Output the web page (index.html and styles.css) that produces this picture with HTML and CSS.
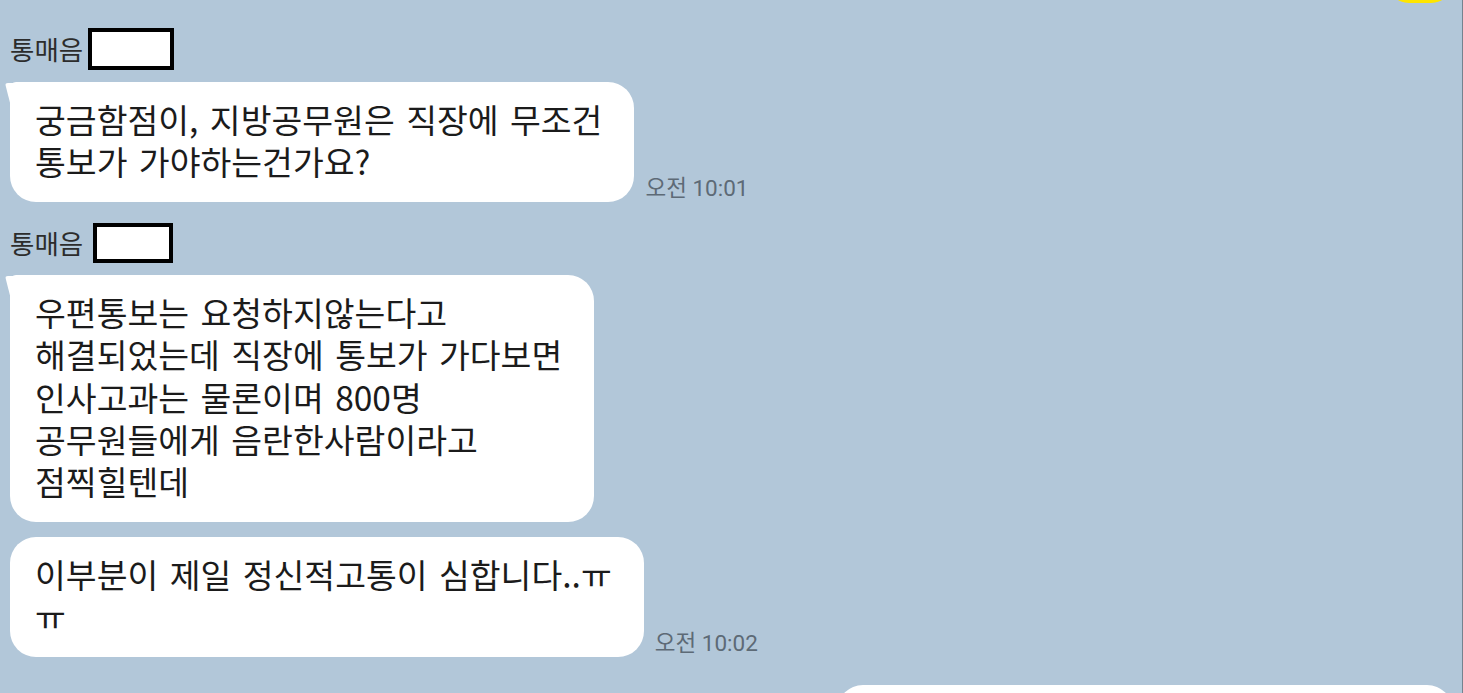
FILE: index.html
```html
<!DOCTYPE html>
<html lang="ko">
<head>
    <meta charset="UTF-8">
    <title>채팅</title>
    <link rel="stylesheet" href="styles.css">
</head>
<body>
<div class="chat">
    <div class="row mine peek">
        <div class="bubble yellow"></div>
    </div>

    <div class="name-row first">
        <span class="name">통매음</span>
        <span class="mask"></span>
    </div>
    <div class="row">
        <div class="bubble tail">궁금함점이, 지방공무원은 직장에 무조건<br>통보가 가야하는건가요?</div>
        <span class="time">오전 10:01</span>
    </div>

    <div class="name-row second">
        <span class="name">통매음</span>
        <span class="mask narrow"></span>
    </div>
    <div class="row">
        <div class="bubble tail">우편통보는 요청하지않는다고<br>해결되었는데 직장에 통보가 가다보면<br>인사고과는 물론이며 800명<br>공무원들에게 음란한사람이라고<br>점찍힐텐데</div>
    </div>
    <div class="row next">
        <div class="bubble">이부분이 제일 정신적고통이 심합니다..ㅠ<br>ㅠ</div>
        <span class="time">오전 10:02</span>
    </div>

    <div class="row mine last">
        <div class="bubble wide"></div>
    </div>
</div>
</body>
</html>
```

FILE: styles.css
```css
* {
    margin: 0;
    padding: 0;
    box-sizing: border-box;
}

html, body {
    height: 100%;
    overflow: hidden;
}

body {
    background: #b2c7d9;
    font-family: "Noto Sans CJK KR", "Noto Sans", sans-serif;
    color: #1b1b1b;
}

.chat {
    min-height: 100vh;
    padding: 0 10px 0 10px;
    box-shadow: inset -1px 0 0 #75838f;
}

.row {
    display: flex;
    align-items: flex-end;
}

.row.mine {
    justify-content: flex-end;
}

.row.peek {
    margin-top: -47px;
}

.row.next {
    margin-top: 15px;
}

.row.last {
    margin-top: 28px;
}

.name-row {
    display: flex;
    align-items: center;
    gap: 5px;
    height: 42px;
    margin-bottom: 12px;
}

.name-row.first {
    margin-top: 25px;
}

.name-row.second {
    margin-top: 21px;
    height: 40px;
    gap: 10px;
}

.name {
    font-size: 26.5px;
    color: #2c2c2c;
    line-height: 1;
}

.mask {
    width: 86px;
    height: 42px;
    border: 4px solid #000;
    background: #fff;
}

.mask.narrow {
    width: 80px;
    height: 40px;
}

.bubble {
    position: relative;
    background: #fff;
    border-radius: 26px;
    padding: 16px 32px 19px 25px;
    font-size: 33.5px;
    line-height: 42.4px;
    word-spacing: 2px;
    white-space: nowrap;
}

.bubble.tail {
    border-top-left-radius: 6px;
}

.bubble.tail::before {
    content: "";
    position: absolute;
    left: -5px;
    top: 1px;
    width: 22px;
    height: 20px;
    background: #fff;
    clip-path: polygon(0 0, 100% 0, 100% 100%, 23% 100%);
    border-top-left-radius: 3px;
}

.bubble.yellow {
    background: #fee500;
    width: 66px;
    height: 50px;
    padding: 0;
    border-radius: 22px;
}

.bubble.wide {
    width: 616px;
    height: 90px;
    padding: 0;
}

.time {
    font-family: "Roboto", "Noto Sans CJK KR", sans-serif;
    font-size: 22.5px;
    line-height: 26px;
    color: #5d6a76;
    margin: 0 11px 1px 11px;
    white-space: nowrap;
}
```
